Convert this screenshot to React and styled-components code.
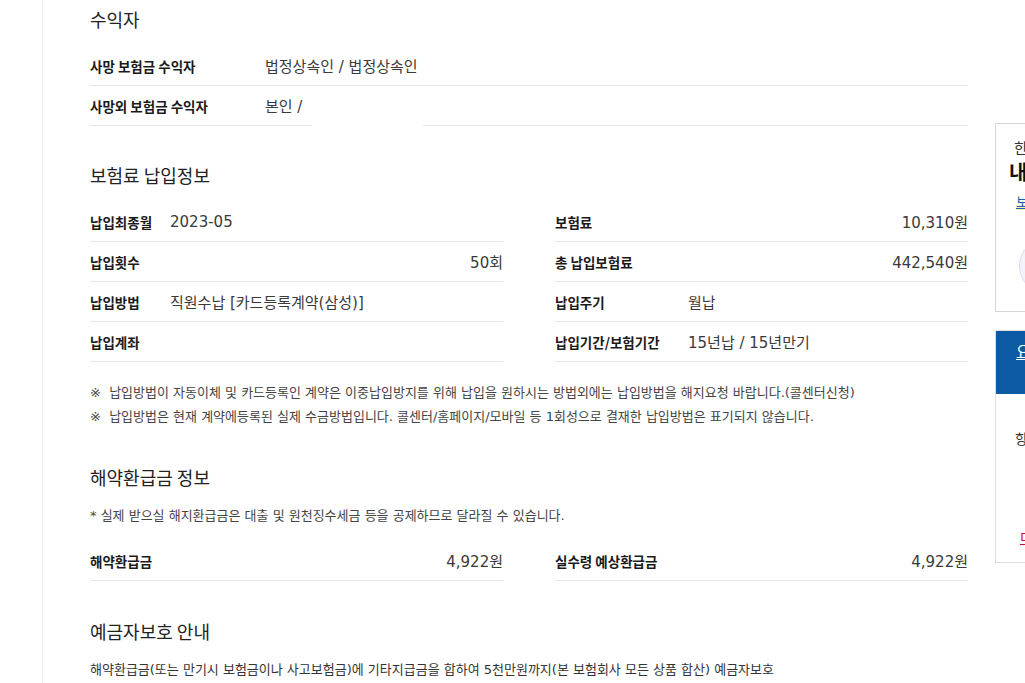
import React from 'react';
import styled, { createGlobalStyle } from 'styled-components';

const GlobalStyle = createGlobalStyle`
  body {
    margin: 0;
    background: #fff;
    font-family: "DejaVu Sans", "Noto Sans CJK KR", sans-serif;
    color: #333;
    overflow: hidden;
  }
`;

const Page = styled.div`
  display: flex;
  width: 1025px;
  height: 683px;
  padding-left: 42px;
  box-sizing: border-box;
  overflow: hidden;
`;

const Main = styled.main`
  flex-shrink: 0;
  width: 878px;
  padding: 6px 27px 0 47px;
  border-left: 1px solid #efefef;
`;

const Section = styled.section`
  margin-top: ${props => props.$gap ?? 36}px;
`;

const Title = styled.h2`
  margin: 0 0 14px;
  font-family: "Noto Sans CJK KR", sans-serif;
  font-size: 18px;
  line-height: 26px;
  font-weight: 400;
  color: #222;
`;

const Columns = styled.div`
  display: grid;
  grid-template-columns: 413px 413px;
  column-gap: 52px;
  margin-top: ${props => props.$top || 0}px;
`;

const Row = styled.div`
  position: relative;
  display: flex;
  align-items: center;
  height: 40px;
  box-sizing: border-box;
  border-bottom: 1px solid #e6e6e6;
`;

const Label = styled.span`
  flex-shrink: 0;
  width: ${props => props.$width}px;
  font-family: "Noto Sans CJK KR", sans-serif;
  font-size: 13.5px;
  font-weight: 700;
  color: #1a1a1a;
`;

const Value = styled.span`
  flex: 1;
  font-size: 15px;
  color: #3a3a3a;
  text-align: ${props => (props.$right ? 'right' : 'left')};
`;

const Mask = styled.span`
  position: absolute;
  left: 222px;
  bottom: -1px;
  width: 111px;
  height: 3px;
  background: #fff;
`;

const Notes = styled.ul`
  list-style: none;
  margin: 19px 0 0;
  padding: 0;
`;

const Note = styled.li`
  font-size: 13px;
  line-height: 24px;
  color: #444;
`;

const SubNote = styled.p`
  margin: 0;
  font-size: 13px;
  line-height: 24px;
  color: #444;
`;

const Paragraph = styled.p`
  margin: 0;
  font-size: 13px;
  line-height: 24px;
  color: #333;
`;

const Sidebar = styled.aside`
  flex-shrink: 0;
  width: 190px;
  padding-top: 123px;
  display: flex;
  flex-direction: column;
  gap: 18px;
`;

const PromoBox = styled.div`
  height: 189px;
  box-sizing: border-box;
  border: 1px solid #d6d6d6;
  padding: 14px 0 0 13px;
  font-family: "Noto Sans CJK KR", sans-serif;
`;

const PromoSmall = styled.div`
  padding-left: 5px;
  font-size: 15px;
  line-height: 20px;
  color: #333;
`;

const PromoBig = styled.div`
  font-size: 20px;
  line-height: 28px;
  font-weight: 700;
  color: #111;
`;

const PromoLink = styled.a`
  display: inline-block;
  margin: 6px 0 0 7px;
  font-size: 14px;
  line-height: 18px;
  color: #1c5fae;
  text-decoration: underline;
  background: linear-gradient(transparent 70%, #fbf2b8 70%);
`;

const Circle = styled.div`
  width: 54px;
  height: 54px;
  margin: 26px 0 0 10px;
  border-radius: 50%;
  background: #f3f3fa;
  border: 1px solid #d9dbe9;
`;

const MenuBox = styled.div`
  height: 233px;
  box-sizing: border-box;
  border: 1px solid #dedede;
  font-family: "Noto Sans CJK KR", sans-serif;
  display: flex;
  flex-direction: column;
`;

const MenuHead = styled.div`
  height: 63px;
  background: #0b5aa3;
  padding: 8px 0 0 20px;
  box-sizing: border-box;
  color: #fff;
  font-size: 16px;
  line-height: 24px;
  text-decoration: underline;
`;

const MenuText = styled.div`
  margin: 34px 0 0 19px;
  font-size: 14px;
  line-height: 20px;
  color: #333;
`;

const MenuAlert = styled.a`
  margin: 79px 0 0 24px;
  font-size: 14px;
  line-height: 20px;
  color: #c8102e;
  text-decoration: underline;
`;

const App = () => (
  <>
    <GlobalStyle />
    <Page>
      <Main>
        <Section $gap={0}>
          <Title>수익자</Title>
          <Row>
            <Label $width={175}>사망 보험금 수익자</Label>
            <Value>법정상속인 / 법정상속인</Value>
          </Row>
          <Row>
            <Label $width={175}>사망외 보험금 수익자</Label>
            <Value>본인 /</Value>
            <Mask />
          </Row>
        </Section>

        <Section>
          <Title>보험료 납입정보</Title>
          <Columns>
            <div>
              <Row>
                <Label $width={80}>납입최종월</Label>
                <Value>2023-05</Value>
              </Row>
              <Row>
                <Label $width={80}>납입횟수</Label>
                <Value $right>50회</Value>
              </Row>
              <Row>
                <Label $width={80}>납입방법</Label>
                <Value>직원수납 [카드등록계약(삼성)]</Value>
              </Row>
              <Row>
                <Label $width={80}>납입계좌</Label>
                <Value />
              </Row>
            </div>
            <div>
              <Row>
                <Label $width={133}>보험료</Label>
                <Value $right>10,310원</Value>
              </Row>
              <Row>
                <Label $width={133}>총 납입보험료</Label>
                <Value $right>442,540원</Value>
              </Row>
              <Row>
                <Label $width={133}>납입주기</Label>
                <Value>월납</Value>
              </Row>
              <Row>
                <Label $width={133}>납입기간/보험기간</Label>
                <Value>15년납 / 15년만기</Value>
              </Row>
            </div>
          </Columns>
          <Notes>
            <Note>※&nbsp; 납입방법이 자동이체 및 카드등록인 계약은 이중납입방지를 위해 납입을 원하시는 방법외에는 납입방법을 해지요청 바랍니다.(콜센터신청)</Note>
            <Note>※&nbsp; 납입방법은 현재 계약에등록된 실제 수금방법입니다. 콜센터/홈페이지/모바일 등 1회성으로 결재한 납입방법은 표기되지 않습니다.</Note>
          </Notes>
        </Section>

        <Section $gap={35}>
          <Title>해약환급금 정보</Title>
          <SubNote>* 실제 받으실 해지환급금은 대출 및 원천징수세금 등을 공제하므로 달라질 수 있습니다.</SubNote>
          <Columns $top={13}>
            <Row>
              <Label $width={120}>해약환급금</Label>
              <Value $right>4,922원</Value>
            </Row>
            <Row>
              <Label $width={133}>실수령 예상환급금</Label>
              <Value $right>4,922원</Value>
            </Row>
          </Columns>
        </Section>

        <Section $gap={37}>
          <Title>예금자보호 안내</Title>
          <Paragraph>해약환급금(또는 만기시 보험금이나 사고보험금)에 기타지급금을 합하여 5천만원까지(본 보험회사 모든 상품 합산) 예금자보호</Paragraph>
        </Section>
      </Main>

      <Sidebar>
        <PromoBox>
          <PromoSmall>한눈에 보는</PromoSmall>
          <PromoBig>내 보험 현황</PromoBig>
          <PromoLink>보장분석 바로가기</PromoLink>
          <Circle />
        </PromoBox>
        <MenuBox>
          <MenuHead>요청 업무</MenuHead>
          <MenuText>항목을 선택하세요</MenuText>
          <MenuAlert>미납 보험료</MenuAlert>
        </MenuBox>
      </Sidebar>
    </Page>
  </>
);

export default App;
